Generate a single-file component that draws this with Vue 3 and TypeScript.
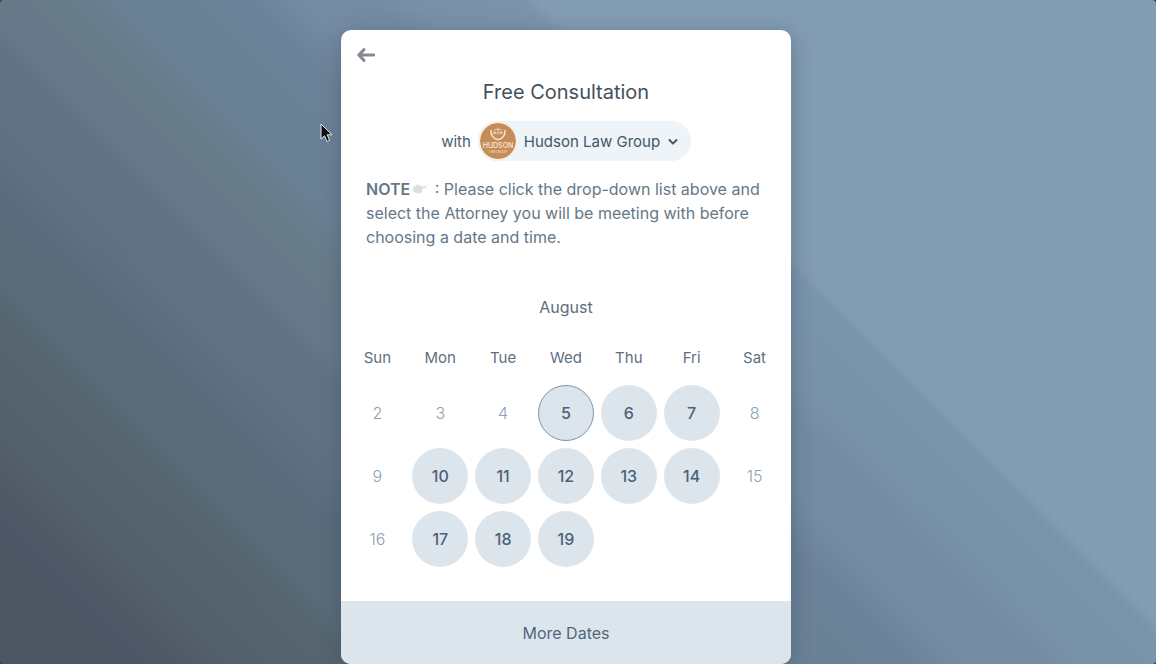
<script setup lang="ts">
import { ref } from 'vue'

interface Day {
  date: number
  open: boolean
}

const weekdays: string[] = ['Sun', 'Mon', 'Tue', 'Wed', 'Thu', 'Fri', 'Sat']
const openDates: number[] = [5, 6, 7, 10, 11, 12, 13, 14, 17, 18, 19]
const today = 5

const day = (date: number): Day => ({ date, open: openDates.includes(date) })
const weeks: (Day | null)[][] = [
  [2, 3, 4, 5, 6, 7, 8].map(day),
  [9, 10, 11, 12, 13, 14, 15].map(day),
  [...[16, 17, 18, 19].map(day), null, null, null],
]

const attorney = ref('Hudson Law Group')
</script>

<template>
  <main class="page">
    <section class="card">
      <button class="back" type="button" aria-label="Back">
        <svg width="18" height="14" viewBox="0 0 18 14" aria-hidden="true">
          <path d="M7 1.6 1.8 7 7 12.4M2.4 7H16.6" />
        </svg>
      </button>

      <h1 class="title">Free Consultation</h1>

      <div class="host">
        <label for="attorney">with</label>
        <div class="pill">
          <svg class="avatar" width="36" height="36" viewBox="0 0 36 36" aria-hidden="true">
            <circle cx="18" cy="18" r="18" fill="#c68c58" />
            <g fill="none" stroke="#f6e6d4" stroke-linecap="round">
              <path d="M11 7.500C10.500 12 13.500 15.800 17.500 16.400M25 7.500C25.500 12 22.500 15.800 18.500 16.400" stroke-width="1.5" />
              <path d="M18 5V11.500M14.800 6.700Q18 5.500 21.200 6.700" stroke-width=".7" />
              <path d="M13.300 10Q14.800 12.200 16.300 10ZM19.700 10Q21.200 12.200 22.700 10Z" stroke-width=".7" />
              <path d="M13.600 10 14.800 6.900 16 10M20 10 21.200 6.900 22.400 10" stroke-width=".3" />
            </g>
            <text x="18" y="25" class="logo-name">HUDSON</text>
            <text x="18" y="30" class="logo-sub">LAW GROUP</text>
          </svg>
          <select id="attorney" v-model="attorney">
            <option>Hudson Law Group</option>
          </select>
          <svg class="chevron" width="10" height="8" viewBox="0 0 10 8" aria-hidden="true">
            <path d="M1.500 2 5 5.600 8.500 2" />
          </svg>
        </div>
      </div>

      <p class="note">
        <strong>NOTE</strong>
        <svg class="hand" width="16" height="12" viewBox="0 0 16 12" aria-hidden="true">
          <path class="glow" d="M1 4 5 1.500 8 1.800 8.500 3.200H14.500V5H10V9Q9 11 6 10.500L1 9Z" />
          <path class="palm" d="M1.500 4.500 5.500 2 7.500 2.500 8 3.500H14V5H10V8.500Q9 10.500 6 10L1.500 8.500Z" />
        </svg>
        : Please click the drop-down list above and select the Attorney you will be meeting with before choosing a date and time.
      </p>

      <table class="calendar">
        <caption>August</caption>
        <thead>
          <tr>
            <th v-for="name in weekdays" :key="name" scope="col">{{ name }}</th>
          </tr>
        </thead>
        <tbody>
          <tr v-for="(week, i) in weeks" :key="i">
            <td v-for="(d, j) in week" :key="j">
              <button
                v-if="d && d.open"
                type="button"
                class="day"
                :class="{ today: d.date === today }"
              >{{ d.date }}</button>
              <span v-else-if="d">{{ d.date }}</span>
            </td>
          </tr>
        </tbody>
      </table>

      <button class="more" type="button">More Dates</button>
    </section>

    <svg class="cursor" width="13" height="20" viewBox="0 0 13 20" aria-hidden="true">
      <path d="M1 1V16L4.500 12.800 7 18.500 9.600 17.400 7.200 11.800H12Z" />
    </svg>
  </main>
</template>

<style>
html {
  background: #34404c;
}
body {
  margin: 0;
}
</style>

<style scoped>
.page {
  position: relative;
  box-sizing: border-box;
  min-height: 100vh;
  padding: 30px 24px 0 0;
  overflow: hidden;
  border-radius: 4px;
  background: linear-gradient(
    45deg,
    #4c5562 0%,
    #4e5765 9%,
    #54616c 13%,
    #56656f 19%,
    #586b78 21%,
    #5a6b7b 26%,
    #617182 29%,
    #637384 34%,
    #667888 35%,
    #687b89 40%,
    #6a8095 43%,
    #6c8298 50%,
    #748ba3 53%,
    #748ba3 57%,
    #7791a8 59%,
    #7a94ac 65%,
    #829cb3 66%,
    #829cb3 100%
  );
  font-family: Inter, "Open Sans", sans-serif;
  font-size: 16px;
  color: #4c6072;
}
.card {
  display: flex;
  flex-direction: column;
  box-sizing: border-box;
  width: 100%;
  max-width: 450px;
  margin: 0 auto;
  overflow: hidden;
  border-radius: 10px;
  background: #fff;
  box-shadow: 0 4px 20px rgba(40, 60, 80, 0.35);
}
button {
  padding: 0;
  border: 0;
  background: none;
  font: inherit;
  color: inherit;
  cursor: pointer;
}
.back {
  align-self: flex-start;
  display: flex;
  margin: 18px 0 0 16px;
}
.back path {
  fill: none;
  stroke: #858b91;
  stroke-width: 3;
  stroke-linecap: round;
  stroke-linejoin: round;
}
.title {
  margin: 16px 0 0;
  font-size: 20px;
  line-height: 28px;
  font-weight: 400;
  text-align: center;
  color: #44515d;
}
.host {
  display: flex;
  justify-content: center;
  align-items: center;
  gap: 7px;
  margin-top: 15px;
  font-size: 15px;
}
.pill {
  position: relative;
  display: flex;
  align-items: center;
  height: 40px;
  padding-left: 2px;
  border-radius: 20px;
  background: #eef4f7;
}
.avatar {
  border-radius: 50%;
  box-shadow: 0 0 0 2px #f4f0e9;
}
.logo-name,
.logo-sub {
  fill: #f8eadb;
  text-anchor: middle;
}
.logo-name {
  font-size: 7px;
  font-weight: 500;
}
.logo-sub {
  font-size: 3px;
}
select {
  appearance: none;
  height: 40px;
  padding: 0 30px 0 8px;
  border: 0;
  border-radius: 20px;
  background: transparent;
  font: inherit;
  color: #425769;
}
.chevron {
  position: absolute;
  right: 13px;
  top: 17px;
  pointer-events: none;
}
.chevron path {
  fill: none;
  stroke: #425769;
  stroke-width: 2;
  stroke-linecap: round;
  stroke-linejoin: round;
}
.note {
  margin: 16px 24px 0 25px;
  line-height: 24px;
  color: #667786;
}
.note strong {
  font-weight: 600;
}
.hand {
  margin: 0 2px;
}
.hand .glow {
  fill: #f7f0d9;
  stroke: #f9f3df;
  stroke-width: 1;
}
.hand .palm {
  fill: #d5dfe7;
}
.calendar {
  width: calc(100% - 10px);
  table-layout: fixed;
  margin: 46px 5px 0;
  border-spacing: 0;
  text-align: center;
}
caption {
  height: 38px;
  line-height: 24px;
  color: #5d6d7a;
}
th {
  height: 48px;
  padding: 0;
  font-size: 15px;
  font-weight: 400;
  color: #5f6f7e;
}
td {
  height: 63px;
  padding: 0;
  color: #8d9fb1;
  font-weight: 300;
}
.day {
  width: 56px;
  height: 56px;
  border-radius: 50%;
  background: #dde5ec;
  font-weight: 500;
  color: #4a6277;
}
.today {
  border: 1px solid #7994ac;
}
.more {
  height: 63px;
  margin-top: 31px;
  background: #dde5ec;
  color: #4f687c;
}
.cursor {
  position: absolute;
  left: 320px;
  top: 123px;
}
.cursor path {
  fill: #0a0d10;
  stroke: #e8edf1;
  stroke-width: 1;
}
</style>
